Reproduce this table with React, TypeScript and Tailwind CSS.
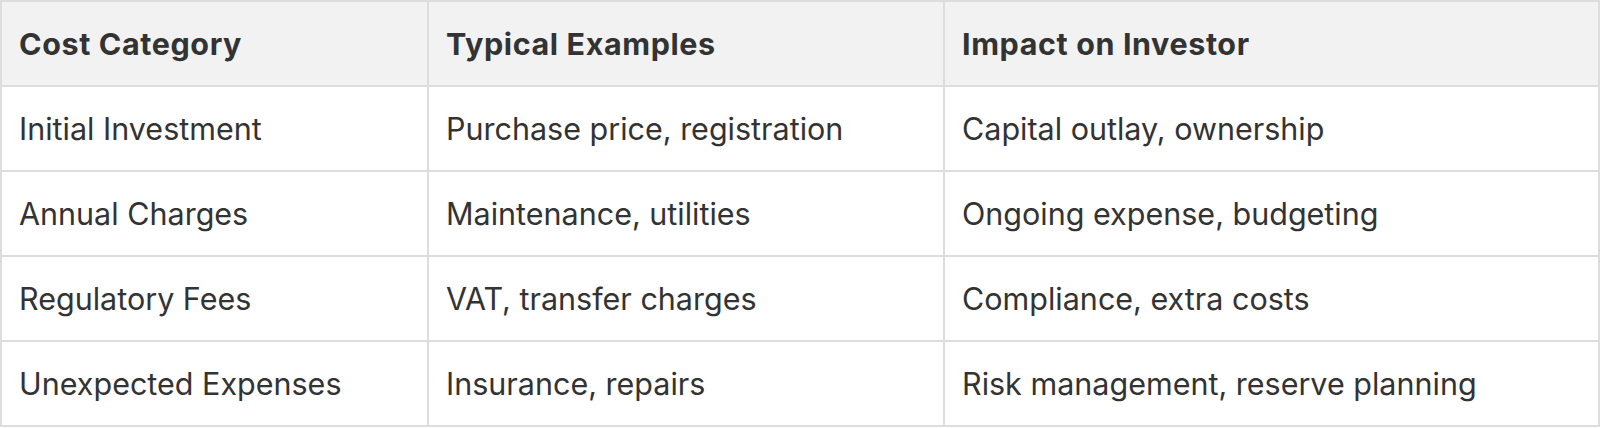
import React from "react";

const rows = [
  ["Initial Investment", "Purchase price, registration", "Capital outlay, ownership"],
  ["Annual Charges", "Maintenance, utilities", "Ongoing expense, budgeting"],
  ["Regulatory Fees", "VAT, transfer charges", "Compliance, extra costs"],
  ["Unexpected Expenses", "Insurance, repairs", "Risk management, reserve planning"],
];

export default function App() {
  return (
    <div className="w-[1600px] h-[428px] bg-white" style={{ fontFamily: "Inter, 'Noto Sans', sans-serif" }}>
      <table className="w-[1600px] border-collapse border-2 border-[#dddddd] text-[#333333] text-[30.5px] table-fixed">
        <colgroup>
          <col className="w-[427px]" />
          <col className="w-[516px]" />
          <col />
        </colgroup>
        <thead>
          <tr className="bg-[#f2f2f2] h-[85px]">
            <th className="border-2 border-[#dddddd] text-left font-bold px-[17px] tracking-[0.6px]">Cost Category</th>
            <th className="border-2 border-[#dddddd] text-left font-bold px-[17px] tracking-[0.6px]">Typical Examples</th>
            <th className="border-2 border-[#dddddd] text-left font-bold px-[17px] tracking-[0.6px]">Impact on Investor</th>
          </tr>
        </thead>
        <tbody>
          {rows.map((r, i) => (
            <tr key={i} className="h-[85px]">
              {r.map((c, j) => (
                <td key={j} className="border-2 border-[#dddddd] text-left px-[17px]">{c}</td>
              ))}
            </tr>
          ))}
        </tbody>
      </table>
    </div>
  );
}
